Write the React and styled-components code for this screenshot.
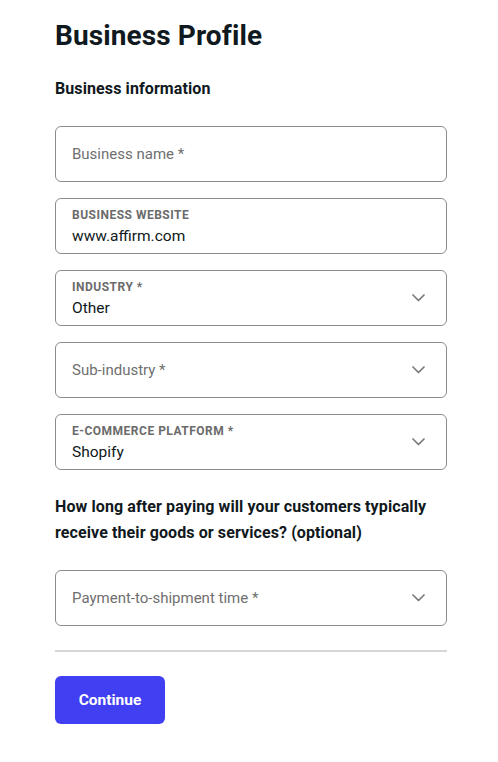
import React from 'react';
import styled, { createGlobalStyle } from 'styled-components';

const GlobalStyle = createGlobalStyle`
  * { box-sizing: border-box; }
  body {
    margin: 0;
    background: #fff;
    font-family: Roboto, "Liberation Sans", sans-serif;
    color: #101820;
  }
`;

const Page = styled.div`
  width: 392px;
  margin-left: 55px;
  padding-top: 18px;
  display: flex;
  flex-direction: column;
`;

const Title = styled.h1`
  margin: 0;
  font-size: 28px;
  line-height: 36px;
  font-weight: 700;
  letter-spacing: 0.1px;
`;

const SectionTitle = styled.h2`
  margin: 0;
  margin-top: ${(p) => p.top || 0}px;
  font-size: 16px;
  line-height: 26px;
  font-weight: 700;
  letter-spacing: 0.1px;
`;

const Fields = styled.div`
  display: flex;
  flex-direction: column;
  gap: 16px;
  margin-top: ${(p) => p.top || 0}px;
`;

const Field = styled.div`
  height: 56px;
  border: 1px solid #8c8c8c;
  border-radius: 6px;
  padding: 0 21px 0 16px;
  display: flex;
  align-items: center;
  gap: 12px;
`;

const FieldBody = styled.div`
  flex: 1;
  display: flex;
  flex-direction: column;
  padding-top: ${(p) => (p.filled ? 3 : 0)}px;
  gap: 3px;
`;

const Label = styled.span`
  font-size: 12px;
  line-height: 14px;
  font-weight: 700;
  color: #6b6b6b;
  text-transform: uppercase;
  letter-spacing: 0.5px;
`;

const Value = styled.span`
  font-size: 15.5px;
  line-height: 22px;
  color: #101820;
`;

const Placeholder = styled.span`
  font-size: 15px;
  line-height: 22px;
  color: #6f6f6f;
`;

const Chevron = () => (
  <svg width="13" height="8" viewBox="0 0 13 8" fill="none">
    <path d="M1 1 L6.5 6.5 L12 1" stroke="#7a7a7a" strokeWidth="1.7" strokeLinecap="round" strokeLinejoin="round" />
  </svg>
);

const Divider = styled.hr`
  margin: 24px 0 0;
  border: 0;
  height: 2px;
  background: #d6d6d6;
`;

const Button = styled.button`
  margin-top: 24px;
  width: 110px;
  height: 48px;
  border: 0;
  border-radius: 6px;
  background: #4040f2;
  color: #fff;
  font-family: inherit;
  font-size: 15.5px;
  font-weight: 700;
`;

const InputField = ({ label, value, placeholder, select }) => (
  <Field>
    <FieldBody filled={!!label}>
      {label && <Label>{label}</Label>}
      {value ? <Value>{value}</Value> : <Placeholder>{placeholder}</Placeholder>}
    </FieldBody>
    {select && <Chevron />}
  </Field>
);

export default function App() {
  return (
    <>
      <GlobalStyle />
      <Page>
        <Title>Business Profile</Title>
        <SectionTitle top={22}>Business information</SectionTitle>
        <Fields top={24}>
          <InputField placeholder="Business name *" />
          <InputField label="Business website" value="www.affirm.com" />
          <InputField label="Industry *" value="Other" select />
          <InputField placeholder="Sub-industry *" select />
          <InputField label="E-commerce platform *" value="Shopify" select />
        </Fields>
        <SectionTitle top={24}>
          How long after paying will your customers typically receive their goods or services? (optional)
        </SectionTitle>
        <Fields top={24}>
          <InputField placeholder="Payment-to-shipment time *" select />
        </Fields>
        <Divider />
        <Button>Continue</Button>
      </Page>
    </>
  );
}
